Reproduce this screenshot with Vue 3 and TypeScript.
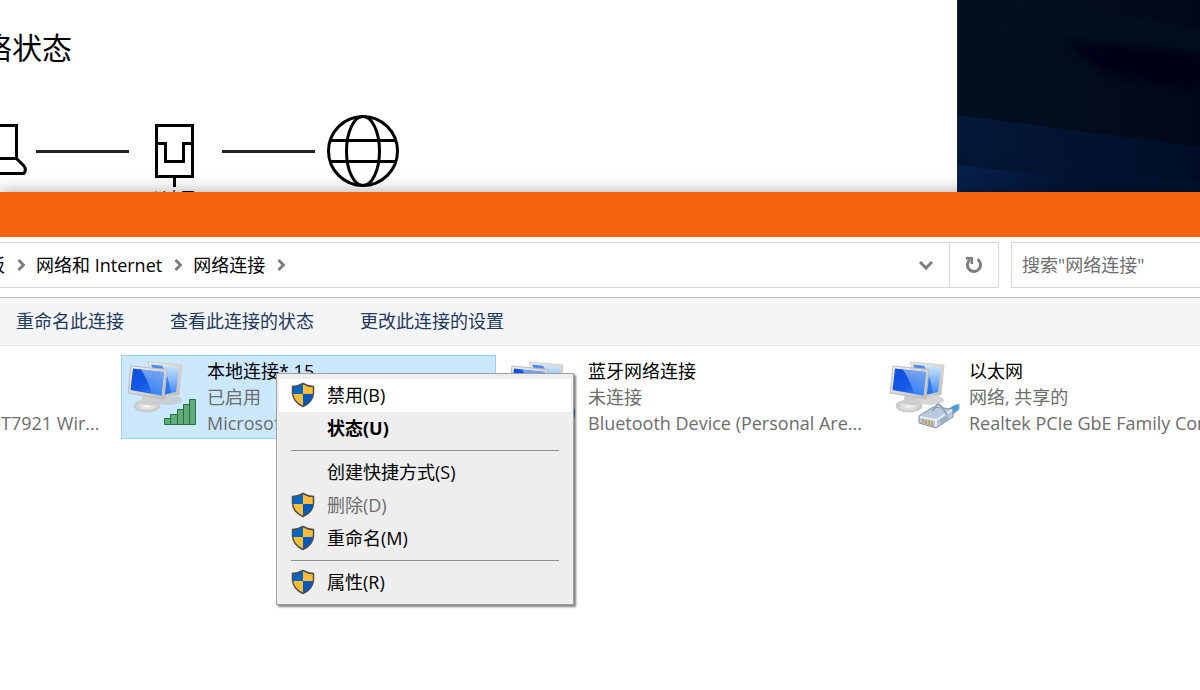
<script setup lang="ts">
import { ref } from 'vue'

interface Adapter {
  name: string
  state: string
  device: string
  badge: 'signal' | 'bluetooth' | 'cable' | 'none'
  selected?: boolean
  clipped?: boolean
}

interface MenuEntry {
  label: string
  shield?: boolean
  bold?: boolean
  disabled?: boolean
  hover?: boolean
}

const adapters: Adapter[] = [
  { name: '', state: '', device: 'T7921 Wir...', badge: 'none', clipped: true },
  { name: '本地连接* 15', state: '已启用', device: 'Microsoft', badge: 'signal', selected: true },
  { name: '蓝牙网络连接', state: '未连接', device: 'Bluetooth Device (Personal Are...', badge: 'bluetooth' },
  { name: '以太网', state: '网络, 共享的', device: 'Realtek PCIe GbE Family Controller', badge: 'cable' },
]

const menuGroups: MenuEntry[][] = [
  [
    { label: '禁用(B)', shield: true, hover: true },
    { label: '状态(U)', bold: true },
  ],
  [
    { label: '创建快捷方式(S)' },
    { label: '删除(D)', shield: true, disabled: true },
    { label: '重命名(M)', shield: true },
  ],
  [{ label: '属性(R)', shield: true }],
]

const crumbs: string[] = ['网络和 Internet', '网络连接']
const commands: string[] = ['重命名此连接', '查看此连接的状态', '更改此连接的设置']
const query = ref('')
</script>

<template>
  <div class="desktop">
    <div class="backdrop">
      <section class="settings">
        <h1 class="heading"><span>网络状态</span></h1>
        <div class="diagram">
          <svg class="laptop" width="27" height="72" viewBox="0 0 27 72" fill="none" stroke="#000" stroke-width="3">
            <path d="M-2 10.500H16.500V43.500H-2M16.500 43.500L24 51Q27 55.500 23.500 58.500H-2" />
          </svg>
          <span class="link link-a"></span>
          <svg class="port" width="39" height="72" viewBox="0 0 39 72" fill="none" stroke="#000" stroke-width="3">
            <path d="M1.500 10.500H37.500V61.500H1.500ZM1.500 28.500H10.500V46.500H28.500V28.500H37.500M19.500 61.500V72" />
          </svg>
          <span class="link link-b"></span>
          <svg class="globe" width="72" height="72" viewBox="0 0 72 72" fill="none" stroke="#000" stroke-width="3">
            <circle cx="36" cy="36" r="34.500" />
            <ellipse cx="36" cy="36" rx="16.500" ry="34.500" />
            <path d="M4 25.500H68M4 46.500H68" />
          </svg>
        </div>
        <p class="port-name">以太网</p>
      </section>
      <svg class="wallpaper" viewBox="0 0 243 192" preserveAspectRatio="none">
        <defs>
          <linearGradient id="sky" x1="0" y1="0" x2="1" y2="0">
            <stop offset="0" stop-color="#010f20" />
            <stop offset="0.600" stop-color="#020c1b" />
            <stop offset="1" stop-color="#01081a" />
          </linearGradient>
          <linearGradient id="beam" x1="0" y1="0" x2="1" y2="0">
            <stop offset="0" stop-color="#041938" />
            <stop offset="1" stop-color="#010d28" />
          </linearGradient>
          <linearGradient id="glow" x1="0" y1="0" x2="1" y2="0">
            <stop offset="0" stop-color="#071f4c" />
            <stop offset="1" stop-color="#021029" />
          </linearGradient>
          <filter id="soft"><feGaussianBlur stdDeviation="5" /></filter>
        </defs>
        <rect width="243" height="192" fill="url(#sky)" />
        <path d="M60 0L243 28V52L110 38L42 30L30 0Z" fill="#021023" opacity="0.600" />
        <path d="M110 42L243 54V92L150 74Z" fill="#010613" filter="url(#soft)" />
        <path d="M0 115L243 147V192H0Z" fill="url(#beam)" />
        <path d="M0 152L243 183V192H0Z" fill="#031633" opacity="0.600" />
        <path d="M0 165L170 185V192H0Z" fill="url(#glow)" />
        <path d="M0 0V192" stroke="#26303c" />
      </svg>
    </div>

    <main class="window">
      <header class="titlebar"></header>
      <div class="nav">
        <nav class="address" aria-label="地址">
          <a class="crumb first" href="#"><span>控制面板</span></a>
          <template v-for="crumb in crumbs" :key="crumb">
            <svg class="chevron" width="8" height="12" viewBox="0 0 8 12"><path d="M1.500 1L6.500 6L1.500 11" /></svg>
            <a class="crumb" href="#">{{ crumb }}</a>
          </template>
          <svg class="chevron" width="8" height="12" viewBox="0 0 8 12"><path d="M1.500 1L6.500 6L1.500 11" /></svg>
          <span class="grow"></span>
          <button class="history" aria-label="历史记录">
            <svg width="14" height="10" viewBox="0 0 14 10"><path d="M1 2L7 8L13 2" /></svg>
          </button>
          <button class="refresh" aria-label="刷新">
            <svg width="18" height="18" viewBox="0 0 18 18">
              <path d="M12.500 3.300A6.600 6.600 0 1 1 4.600 3.900" />
              <path class="head" d="M1 1H8V8H5.500V3.500H1Z" />
            </svg>
          </button>
        </nav>
        <input v-model="query" class="search" type="text" aria-label="搜索" placeholder='搜索"网络连接"' />
      </div>

      <div class="commands">
        <button v-for="command in commands" :key="command">{{ command }}</button>
      </div>

      <div class="files">
        <article
          v-for="adapter in adapters"
          :key="adapter.device"
          class="adapter"
          :class="{ selected: adapter.selected, clipped: adapter.clipped }"
        >
          <svg v-if="adapter.badge !== 'none'" class="pc" width="74" height="72" viewBox="0 0 74 72">
            <defs>
              <linearGradient id="screen" x1="0" y1="0" x2="1" y2="1">
                <stop offset="0" stop-color="#0f4fdc" />
                <stop offset="0.500" stop-color="#1458e4" />
                <stop offset="1" stop-color="#3f8cf8" />
              </linearGradient>
              <linearGradient id="shine" x1="0" y1="0" x2="0" y2="1">
                <stop offset="0" stop-color="#cfe8ff" />
                <stop offset="1" stop-color="#3a86f6" />
              </linearGradient>
              <linearGradient id="frame" x1="0" y1="0" x2="1" y2="1">
                <stop offset="0" stop-color="#f2f2f2" />
                <stop offset="1" stop-color="#bcbcbc" />
              </linearGradient>
              <radialGradient id="foot">
                <stop offset="0" stop-color="#fafafa" />
                <stop offset="1" stop-color="#c4c4c4" />
              </radialGradient>
            </defs>
            <ellipse cx="41" cy="41" rx="14" ry="5" fill="#c4c4c4" opacity="0.700" />
            <path d="M21 3L55 6L52 36L34 38Z" fill="url(#frame)" stroke="#cfcfcf" />
            <path d="M24 5.500L52 8.500L49 33L36 36Z" fill="url(#shine)" />
            <path d="M24 5.500L35 6.700Q42 18 44 34L36 36Z" fill="#1e66ea" opacity="0.700" />
            <ellipse cx="20" cy="47" rx="13" ry="6" fill="url(#foot)" stroke="#cacaca" />
            <path d="M16 35L28 37L29 45Q22 48 14 44Z" fill="#cecece" />
            <path d="M4 7L40 10.500L37 40L1 34Z" fill="url(#frame)" stroke="#bdbdbd" />
            <path d="M6 9.500L37 13L34.500 36.500L3.500 31Z" fill="url(#screen)" />
            <path d="M14 10.400L37 13L34.500 36.500L25 34.800Q21 21 14 10.400Z" fill="url(#shine)" opacity="0.550" />

            <g v-if="adapter.badge === 'signal'" fill="#62aa78" stroke="#23713f">
              <path d="M37.500 59.500H43.500V65.500H37.500ZM43.500 55.500H50.500V65.500H43.500ZM50.500 50.500H56.500V65.500H50.500ZM56.500 45.500H62.500V65.500H56.500ZM62.500 40.500H68.500V65.500H62.500Z" />
            </g>
            <g v-else-if="adapter.badge === 'bluetooth'">
              <ellipse cx="55" cy="54" rx="12" ry="15" fill="#1878c8" />
              <path d="M49 48L61 60L55 66V42L61 48L49 60" fill="none" stroke="#fff" stroke-width="2" />
            </g>
            <g v-else stroke-linejoin="round">
              <path d="M60 50Q64 46 70 45V50Q66 54 62 56Z" fill="#4b9cda" stroke="#7fb5dc" />
              <path d="M30 57L44 48L64 50V58L47 69L30 64Z" fill="#b9c8da" stroke="#8193aa" />
              <path d="M31 58L47 61L63 51M47 61V68" fill="none" stroke="#e4edf8" stroke-width="2" />
              <path d="M43 52L49 45L53 48L58 56" fill="none" stroke="#93a3b8" stroke-width="2" />
              <path d="M34 60V64M37 61V65M40 61V66M43 62V67" stroke="#c0a95c" stroke-width="2" />
              <path d="M51 61L59 56V60L51 65Z" fill="#9aaec6" />
            </g>
          </svg>
          <div class="info">
            <span class="name">{{ adapter.name }}</span>
            <span>{{ adapter.state }}</span>
            <span>{{ adapter.device }}</span>
          </div>
        </article>

        <div class="menu" role="menu">
          <div v-for="(group, index) in menuGroups" :key="index" class="group">
            <button
              v-for="entry in group"
              :key="entry.label"
              role="menuitem"
              :disabled="entry.disabled"
              :class="{ bold: entry.bold, hover: entry.hover }"
            >
              <span class="slot">
                <svg v-if="entry.shield" width="24" height="26" viewBox="0 0 24 26">
                  <path d="M12 1.500Q7 4.500 1.500 4.500V12H12Z" fill="#0067c6" />
                  <path d="M12 1.500Q17 4.500 22.500 4.500V12H12Z" fill="#ffbc35" />
                  <path d="M1.500 12Q2 20 12 24.500V12Z" fill="#ffbc35" />
                  <path d="M22.500 12Q22 20 12 24.500V12Z" fill="#0058bd" />
                  <path d="M12 1.500Q7 4.500 1.500 4.500V11Q2 20 12 24.500Q22 20 22.500 11V4.500Q17 4.500 12 1.500Z" fill="none" stroke="#4b4f52" stroke-width="1.500" />
                </svg>
              </span>
              {{ entry.label }}
            </button>
          </div>
        </div>
      </div>
    </main>
  </div>
</template>

<style>
body {
  background: #fff;
}
</style>

<style scoped>
.desktop {
  display: flex;
  flex-direction: column;
  min-height: 100vh;
  overflow: hidden;
  font-family: "Open Sans", "Noto Sans CJK SC", sans-serif;
  font-size: 18px;
  line-height: 26px;
  color: #000;
}
.desktop * {
  box-sizing: border-box;
}
button,
input {
  margin: 0;
  padding: 0;
  border: 0;
  border-radius: 0;
  background: none;
  font: inherit;
  color: inherit;
}
svg {
  display: block;
  flex: none;
}

/* Settings page and wallpaper behind the window */
.backdrop {
  display: flex;
  height: 192px;
  overflow: hidden;
}
.settings {
  flex: 1;
  overflow: hidden;
}
.heading {
  display: flex;
  justify-content: flex-end;
  width: 72px;
  margin: 28px 0 0;
  font-size: 30px;
  font-weight: 400;
  line-height: 40px;
  white-space: nowrap;
}
.diagram {
  display: flex;
  align-items: center;
  margin-top: 47px;
}
.link {
  width: 93px;
  height: 3px;
  background: #222;
}
.link-a {
  margin: 0 26px 0 9px;
}
.link-b {
  margin: 0 12px 0 28px;
}
.port-name {
  margin: 0;
  padding-left: 153px;
  font-size: 14px;
  line-height: 20px;
}
.wallpaper {
  width: 243px;
  height: 100%;
}

/* Explorer window */
.window {
  position: relative;
  flex: 1;
  background: #fff;
  box-shadow: 0 0 16px rgba(0, 0, 0, 0.35);
}
.titlebar {
  height: 45px;
  background: #f7630c;
}
.nav {
  display: flex;
  gap: 12px;
  padding: 5px 0 9px;
  border-bottom: 1px solid #bcbcbc;
}
.address {
  display: flex;
  flex: 1;
  align-items: center;
  height: 46px;
  border: 1px solid #d9d9d9;
  border-left: 0;
}
.crumb {
  margin: 0 12px 0 11px;
  padding-bottom: 1px;
  color: #000;
  text-decoration: none;
  white-space: nowrap;
}
.crumb.first {
  display: flex;
  justify-content: flex-end;
  width: 5px;
  margin-left: 0;
}
.chevron {
  fill: none;
  stroke: #7d7d7d;
  stroke-width: 3;
}
.grow {
  flex: 1;
}
.history,
.refresh {
  display: flex;
  align-items: center;
  justify-content: center;
  height: 100%;
}
.history {
  width: 46px;
}
.refresh {
  width: 49px;
  border-left: 1px solid #d9d9d9;
}
.history path,
.refresh path {
  fill: none;
  stroke: #7d7d7d;
  stroke-width: 3;
}
.refresh .head {
  fill: #7d7d7d;
  stroke: none;
}
.search {
  width: 189px;
  height: 46px;
  padding-left: 10px;
  border: 1px solid #d9d9d9;
  border-right: 0;
}
.search::placeholder {
  color: #6d6d6d;
  opacity: 1;
}
.commands {
  display: flex;
  gap: 46px;
  padding: 10px 16px 11px;
  border-bottom: 1px solid #e6e8ec;
  background: #f4f5f7;
  color: #1e395b;
}

/* Adapter list */
.files {
  position: relative;
  display: flex;
  gap: 6px;
  padding-top: 9px;
}
.adapter {
  display: flex;
  flex: none;
  width: 375px;
  height: 84px;
  padding: 2px 5px 0;
  border: 1px solid transparent;
}
.adapter.clipped {
  width: 115px;
  padding-left: 0;
}
.adapter.selected {
  border-color: #99d1ff;
  background: #cce8ff;
}
.pc {
  margin: 1px 6px 0 0;
}
.info {
  display: flex;
  flex: 1;
  flex-direction: column;
  color: #6d6d6d;
  white-space: nowrap;
}
.info span {
  height: 26px;
}
.info .name {
  color: #000;
}

/* Context menu */
.menu {
  position: absolute;
  top: 27px;
  left: 276px;
  width: 298px;
  padding: 5px 2px;
  border: 1px solid #a0a0a0;
  background: #eee;
  box-shadow: 2px 2px 2px rgba(0, 0, 0, 0.5);
}
.group + .group::before {
  content: "";
  display: block;
  height: 1px;
  margin: 5px 12px;
  background: #919191;
}
.menu button {
  display: flex;
  align-items: center;
  width: 100%;
  height: 33px;
  padding: 0 0 2px 12px;
}
.menu button:disabled {
  color: #6d6d6d;
}
.menu .hover {
  background: #fff;
}
.menu .bold {
  font-weight: 700;
}
.slot {
  width: 36px;
}
</style>
